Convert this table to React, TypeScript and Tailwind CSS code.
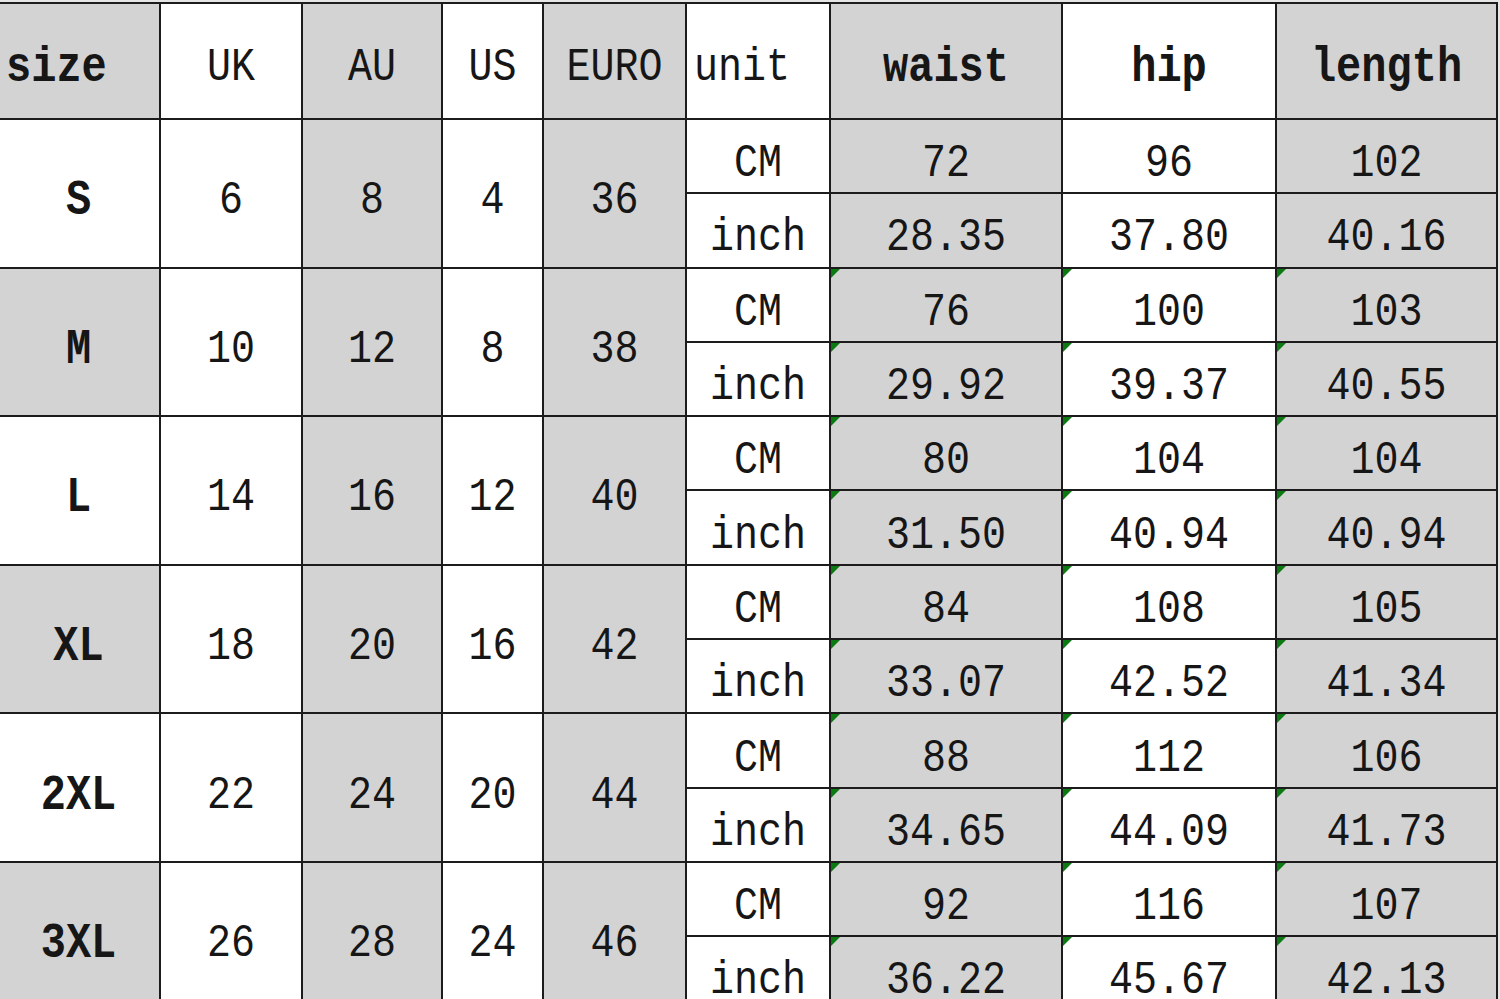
const sizes = [
  { size: 'S', uk: '6', au: '8', us: '4', euro: '36', cm: ['72', '96', '102'], inch: ['28.35', '37.80', '40.16'] },
  { size: 'M', uk: '10', au: '12', us: '8', euro: '38', cm: ['76', '100', '103'], inch: ['29.92', '39.37', '40.55'] },
  { size: 'L', uk: '14', au: '16', us: '12', euro: '40', cm: ['80', '104', '104'], inch: ['31.50', '40.94', '40.94'] },
  { size: 'XL', uk: '18', au: '20', us: '16', euro: '42', cm: ['84', '108', '105'], inch: ['33.07', '42.52', '41.34'] },
  { size: '2XL', uk: '22', au: '24', us: '20', euro: '44', cm: ['88', '112', '106'], inch: ['34.65', '44.09', '41.73'] },
  { size: '3XL', uk: '26', au: '28', us: '24', euro: '46', cm: ['92', '116', '107'], inch: ['36.22', '45.67', '42.13'] },
];

const grey = 'bg-[#d3d3d3]';
const white = 'bg-white';
// waist, hip, length shading
const measureBg = [grey, white, grey];

const cell = 'border-2 border-[#1c1c1c] text-center align-middle p-0';

function Marker() {
  // little green corner triangle, spreadsheet style
  return (
    <svg className="absolute left-0 top-0" width="9" height="9" viewBox="0 0 9 9">
      <path d="M0 0 L9 0 L0 9 Z" fill="#0b7a12" />
    </svg>
  );
}

function T({ children }: { children: React.ReactNode }) {
  return <span className="inline-block scale-y-[1.17]">{children}</span>;
}

export default function App() {
  return (
    <div className="w-[1500px] h-[999px] overflow-hidden bg-[#e6e6e6] pt-[2px]">
      <table
        className="table-fixed border-collapse text-[#161616] text-[40px] leading-none ml-[-2px]"
        style={{ fontFamily: '"Liberation Mono", "Courier New", monospace' }}
      >
        <colgroup>
          <col className="w-[162px]" />
          <col className="w-[142px]" />
          <col className="w-[140px]" />
          <col className="w-[101px]" />
          <col className="w-[143px]" />
          <col className="w-[144px]" />
          <col className="w-[232px]" />
          <col className="w-[214px]" />
          <col className="w-[221px]" />
        </colgroup>
        <thead>
          <tr className="h-[116px]">
            <th className={`${cell} ${grey} border-l-0 text-left pl-[8px] pt-[14px] font-bold text-[42px]`}><T>size</T></th>
            <th className={`${cell} ${white} pt-[14px] font-normal`}><T>UK</T></th>
            <th className={`${cell} ${grey} pt-[14px] font-normal`}><T>AU</T></th>
            <th className={`${cell} ${white} pt-[14px] font-normal`}><T>US</T></th>
            <th className={`${cell} ${grey} pt-[14px] font-normal`}><T>EURO</T></th>
            <th className={`${cell} ${white} pt-[14px] font-normal text-left pl-[7px]`}><T>unit</T></th>
            <th className={`${cell} ${grey} pt-[14px] font-bold text-[42px]`}><T>waist</T></th>
            <th className={`${cell} ${white} pt-[14px] font-bold text-[42px]`}><T>hip</T></th>
            <th className={`${cell} ${grey} pt-[14px] font-bold text-[42px]`}><T>length</T></th>
          </tr>
        </thead>
        <tbody>
          {sizes.map((row, i) => {
            const sizeBg = i % 2 === 0 ? white : grey;
            const marked = i > 0;
            return [
              <tr key={row.size + '-cm'} className="h-[74.3px]">
                <td rowSpan={2} className={`${cell} ${sizeBg} border-l-0 font-bold text-[42px] pt-[16px]`}><T>{row.size}</T></td>
                <td rowSpan={2} className={`${cell} ${white} pt-[16px]`}><T>{row.uk}</T></td>
                <td rowSpan={2} className={`${cell} ${grey} pt-[16px]`}><T>{row.au}</T></td>
                <td rowSpan={2} className={`${cell} ${white} pt-[16px]`}><T>{row.us}</T></td>
                <td rowSpan={2} className={`${cell} ${grey} pt-[16px]`}><T>{row.euro}</T></td>
                <td className={`${cell} ${white} pt-[16px]`}><T>CM</T></td>
                {row.cm.map((v, j) => (
                  <td key={j} className={`${cell} ${measureBg[j]} relative pt-[16px]`}>
                    {marked && <Marker />}
                    <T>{v}</T>
                  </td>
                ))}
              </tr>,
              <tr key={row.size + '-inch'} className="h-[74.3px]">
                <td className={`${cell} ${white} pt-[16px]`}><T>inch</T></td>
                {row.inch.map((v, j) => (
                  <td key={j} className={`${cell} ${measureBg[j]} relative pt-[16px]`}>
                    {marked && <Marker />}
                    <T>{v}</T>
                  </td>
                ))}
              </tr>,
            ];
          })}
        </tbody>
      </table>
    </div>
  );
}
